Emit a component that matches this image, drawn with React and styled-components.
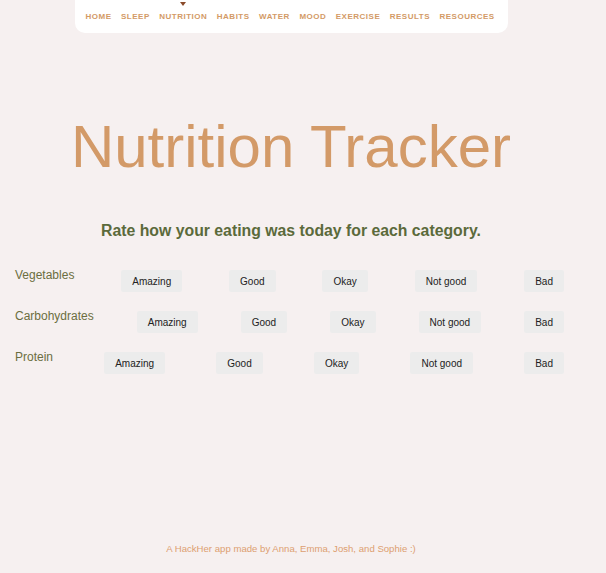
import React, {useState} from 'react';
import styled, {createGlobalStyle} from 'styled-components';

const GlobalStyle = createGlobalStyle`
    html, body {
        margin:0;
        padding:0;
        background-color:#f6f0f0;
    }
    body {
        font-family:"Liberation Sans", Arial, sans-serif;
    }
`

const Page = styled.div`
    width:582px;
    min-height:573px;
    display:flex;
    flex-direction:column;
`

const Nav = styled.nav`
    align-self:center;
    width:433px;
    height:33px;
    box-sizing:border-box;
    padding-left:11px;
    background-color:#ffffff;
    border-radius:0 0 10px 10px;
    display:flex;
    align-items:center;
    gap:9.5px;
`

const NavItem = styled.a`
    position:relative;
    font-size:8px;
    line-height:9px;
    font-weight:bold;
    letter-spacing:0.5px;
    text-transform:uppercase;
    color:#d39a66;
    text-decoration:none;
    cursor:pointer;

    &::before {
        content:'';
        display:${props => props.active ? 'block' : 'none'};
        position:absolute;
        left:50%;
        top:-10px;
        margin-left:-3.5px;
        border-left:3.5px solid transparent;
        border-right:3.5px solid transparent;
        border-top:4px solid #8a4a2a;
    }
`

const Title = styled.h1`
    margin:80px 0 0;
    font-size:60px;
    line-height:68px;
    font-weight:normal;
    text-align:center;
    color:#d39a68;
`

const Subtitle = styled.h2`
    margin:41px 0 0;
    font-size:15.8px;
    line-height:18px;
    font-weight:bold;
    text-align:center;
    color:#5b6a3b;
`

const Rows = styled.div`
    margin-top:30px;
    display:flex;
    flex-direction:column;
    gap:19px;
`

const Row = styled.div`
    display:flex;
    align-items:flex-start;
    justify-content:space-between;
    padding:0 18px 0 15px;
`

const Label = styled.span`
    font-size:12px;
    line-height:12px;
    margin-top:-1px;
    color:#6b6e40;
`

const Choice = styled.button`
    height:22px;
    padding:0 11px;
    border:none;
    border-radius:2px;
    font-family:"Liberation Sans", Arial, sans-serif;
    font-size:10px;
    color:#222222;
    background-color:${props => props.picked ? '#dcdcdc' : '#ececec'};
    cursor:pointer;
`

const Footer = styled.footer`
    margin-top:auto;
    padding-bottom:18px;
    font-size:9.6px;
    line-height:12px;
    text-align:center;
    color:#dd9f70;
`

const links = ['Home','Sleep','Nutrition','Habits','Water','Mood','Exercise','Results','Resources']
const categories = ['Vegetables','Carbohydrates','Protein']
const ratings = ['Amazing','Good','Okay','Not good','Bad']

const App = ()=> {

    const [picks, setPicks] = useState({})

    return (
        <>
        <GlobalStyle/>
        <Page>
            <Nav>
                {links.map(link => (
                    <NavItem key={link} active={link === 'Nutrition'}>{link}</NavItem>
                ))}
            </Nav>
            <Title>Nutrition Tracker</Title>
            <Subtitle>Rate how your eating was today for each category.</Subtitle>
            <Rows>
                {categories.map(cat => (
                    <Row key={cat}>
                        <Label>{cat}</Label>
                        {ratings.map(r => (
                            <Choice
                                key={r}
                                picked={picks[cat] === r}
                                onClick={()=> setPicks({...picks, [cat]:r})}
                            >{r}</Choice>
                        ))}
                    </Row>
                ))}
            </Rows>
            <Footer>A HackHer app made by Anna, Emma, Josh, and Sophie :)</Footer>
        </Page>
        </>
    )
}

export default App;
